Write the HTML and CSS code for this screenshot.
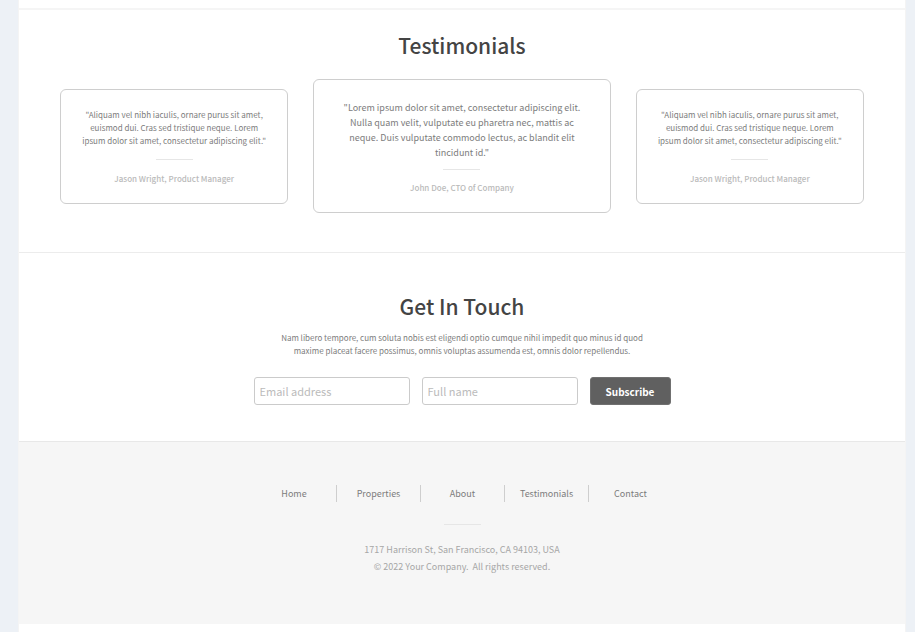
FILE: index.html
```html
<!DOCTYPE html>
<html lang="en">
<head>
<meta charset="utf-8">
<meta name="viewport" content="width=device-width, initial-scale=1">
<title>Your Company</title>
<link rel="stylesheet" href="styles.css">
</head>
<body>
<div class="page">
  <main>
    <section class="testimonials" id="testimonials">
      <h2>Testimonials</h2>
      <div class="cards">
        <figure class="card">
          <blockquote>"Aliquam vel nibh iaculis, ornare purus sit amet, euismod dui. Cras sed tristique neque. Lorem ipsum dolor sit amet, consectetur adipiscing elit."</blockquote>
          <hr class="divider">
          <figcaption>Jason Wright, Product Manager</figcaption>
        </figure>
        <figure class="card card-featured">
          <blockquote>"Lorem ipsum dolor sit amet, consectetur adipiscing elit. Nulla quam velit, vulputate eu pharetra nec, mattis ac neque. Duis vulputate commodo lectus, ac blandit elit tincidunt id."</blockquote>
          <hr class="divider">
          <figcaption>John Doe, CTO of Company</figcaption>
        </figure>
        <figure class="card">
          <blockquote>"Aliquam vel nibh iaculis, ornare purus sit amet, euismod dui. Cras sed tristique neque. Lorem ipsum dolor sit amet, consectetur adipiscing elit."</blockquote>
          <hr class="divider">
          <figcaption>Jason Wright, Product Manager</figcaption>
        </figure>
      </div>
    </section>
    <section class="contact" id="contact">
      <h2>Get In Touch</h2>
      <p>Nam libero tempore, cum soluta nobis est eligendi optio cumque nihil impedit quo minus id quod maxime placeat facere possimus, omnis voluptas assumenda est, omnis dolor repellendus.</p>
      <form class="signup">
        <input type="email" aria-label="Email address" placeholder="Email address">
        <input type="text" aria-label="Full name" placeholder="Full name">
        <button type="submit">Subscribe</button>
      </form>
    </section>
  </main>
  <footer>
    <nav>
      <a href="#">Home</a>
      <a href="#">Properties</a>
      <a href="#">About</a>
      <a href="#testimonials">Testimonials</a>
      <a href="#contact">Contact</a>
    </nav>
    <hr class="divider">
    <address>1717 Harrison St, San Francisco, CA 94103, USA</address>
    <p>© 2022 Your Company.&nbsp; All rights reserved.</p>
  </footer>
</div>
</body>
</html>
```
FILE: styles.css
```css
* {
  box-sizing: border-box;
}

body {
  margin: 0;
  background: #edf1f6;
  color: #7c7c7c;
  font-family: "Noto Sans CJK SC", "Noto Sans", sans-serif;
  font-size: 8px;
  line-height: 13px;
}

.page {
  min-height: 100vh;
  margin: 0 9px 0 18px;
  padding-top: 8px;
  background: #fff;
  border-left: 1px solid #f4f4f4;
  border-right: 1px solid #f4f4f4;
  text-align: center;
}

h2 {
  margin: 0;
  color: #444;
  font-size: 21px;
  font-weight: 500;
  line-height: 32px;
}

section {
  border-top: 1px solid #ececec;
}

.testimonials {
  padding: 19px 41px 39px;
  border-top: 2px solid #f5f5f5;
}

.cards {
  display: grid;
  grid-template-columns: 228fr 297fr 228fr;
  gap: 25px;
  align-items: center;
  margin-top: 18px;
}

.card {
  margin: 0;
  padding: 18px 19px;
  border: 1px solid #cecece;
  border-radius: 6px;
}

.card-featured {
  padding: 20px 22px 18px;
}

blockquote {
  margin: 0;
}

.card-featured blockquote {
  font-size: 9px;
  line-height: 15px;
}

figcaption {
  color: #bababa;
  font-weight: 500;
}

.divider {
  width: 37px;
  height: 1px;
  margin: 12px auto;
  border: 0;
  background: #e6e6e6;
}

.card-featured .divider {
  margin: 9px auto 11px;
}

.contact {
  padding: 37px 20px 36px;
}

.contact p {
  max-width: 380px;
  margin: 9px auto 20px;
}

.signup {
  display: flex;
  flex-wrap: wrap;
  justify-content: center;
  gap: 12px;
}

.signup input,
.signup button {
  height: 28px;
  font-family: inherit;
  font-size: 11px;
  border-radius: 3px;
}

.signup input {
  width: 156px;
  padding: 0 5px;
  border: 1px solid #cbcbcb;
  color: #666;
}

.signup input::placeholder {
  color: #bbb;
}

.signup button {
  width: 81px;
  padding: 0;
  border: 1px solid #707070;
  background: #606060;
  color: #fff;
  font-size: 10px;
  font-weight: 700;
}

footer {
  padding: 43px 20px 49px;
  border-top: 1px solid #e8e8e8;
  background: #f6f6f6;
  color: #a6a6a6;
  font-size: 9px;
  line-height: 17px;
}

nav {
  display: flex;
  justify-content: center;
}

nav a {
  width: 84px;
  border-left: 1px solid #cecece;
  color: #7c7c7c;
  text-decoration: none;
}

nav a:first-child {
  border-left: 0;
}

footer .divider {
  margin: 22px auto 16px;
}

address {
  font-style: normal;
}

footer p {
  margin: 0;
}
```
